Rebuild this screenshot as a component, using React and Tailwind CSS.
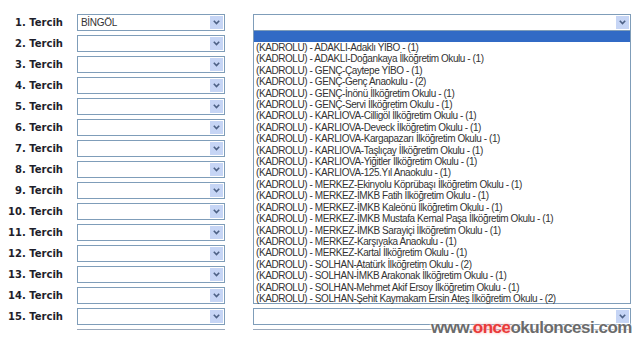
const schools = [
  'ADAKLI-Adaklı YİBO - (1)',
  'ADAKLI-Doğankaya İlköğretim Okulu - (1)',
  'GENÇ-Çaytepe YİBO - (1)',
  'GENÇ-Genç Anaokulu - (2)',
  'GENÇ-İnönü İlköğretim Okulu - (1)',
  'GENÇ-Servi İlköğretim Okulu - (1)',
  'KARLIOVA-Cilligöl İlköğretim Okulu - (1)',
  'KARLIOVA-Deveck İlköğretim Okulu - (1)',
  'KARLIOVA-Kargapazarı İlköğretim Okulu - (1)',
  'KARLIOVA-Taşlıçay İlköğretim Okulu - (1)',
  'KARLIOVA-Yiğitler İlköğretim Okulu - (1)',
  'KARLIOVA-125.Yıl Anaokulu - (1)',
  'MERKEZ-Ekinyolu Köprübaşı İlköğretim Okulu - (1)',
  'MERKEZ-İMKB Fatih İlköğretim Okulu - (1)',
  'MERKEZ-İMKB Kaleönü İlköğretim Okulu - (1)',
  'MERKEZ-İMKB Mustafa Kemal Paşa İlköğretim Okulu - (1)',
  'MERKEZ-İMKB Sarayiçi İlköğretim Okulu - (1)',
  'MERKEZ-Karşıyaka Anaokulu - (1)',
  'MERKEZ-Kartal İlköğretim Okulu - (1)',
  'SOLHAN-Atatürk İlköğretim Okulu - (2)',
  'SOLHAN-İMKB Arakonak İlköğretim Okulu - (1)',
  'SOLHAN-Mehmet Akif Ersoy İlköğretim Okulu - (1)',
  'SOLHAN-Şehit Kaymakam Ersin Ateş İlköğretim Okulu - (2)'
]

function Arrow() {
  return (
    <div className="absolute right-[1px] top-[1px] w-[13px] h-[13px] bg-[#c6d5f5] flex items-center justify-center">
      <svg width="7" height="5" viewBox="0 0 7 5">
        <path d="M0.8 0.8 L3.5 3.6 L6.2 0.8" fill="none" stroke="#4d6185" strokeWidth="1.6" />
      </svg>
    </div>
  )
}

function Select({ wide, value, children }) {
  return (
    <div className={`relative h-[17px] border border-[#7f9db9] bg-white ${wide ? 'w-[378px]' : 'w-[148px]'}`}>
      {value && (
        <span className="absolute left-[3px] top-[1px] text-[10px] leading-[13px] tracking-[-0.3px] text-[#333] font-['Liberation_Sans',sans-serif]">
          {value}
        </span>
      )}
      <Arrow />
      {children}
    </div>
  )
}

function DropList() {
  return (
    <div className="absolute left-[-1px] top-full w-[378px] h-[274px] border border-[#7f9db9] bg-white z-10 font-['Liberation_Sans',sans-serif] text-[10px] leading-[11.4px] tracking-[-0.42px] text-[#333]">
      <div className="h-[11px] bg-[#316ac5]" />
      {schools.map((s) => (
        <div key={s} className="pl-[2px] whitespace-nowrap">(KADROLU) - {s}</div>
      ))}
    </div>
  )
}

export default function App() {
  const rows = Array.from({ length: 15 }, (_, i) => i + 1)

  return (
    <div className="relative w-[640px] h-[342px] overflow-hidden bg-white">
      <div className="flex flex-col gap-[4px] pt-[14px]">
        {rows.map((n) => (
          <div key={n} className="flex items-center h-[17px]">
            <div className="w-[64px] pr-[1px] text-right text-[10px] font-bold text-[#1e1e2a] font-['DejaVu_Sans',sans-serif]">
              {n}. Tercih
            </div>
            <div className="ml-[13px]">
              <Select value={n === 1 ? 'BİNGÖL' : ''} />
            </div>
            <div className="ml-[28px]">
              <Select wide>{n === 1 && <DropList />}</Select>
            </div>
          </div>
        ))}
        {/* next row, cut off */}
        <div className="flex h-[17px]">
          <div className="ml-[77px] w-[148px] border-t border-[#9aa9bc]" />
          <div className="ml-[28px] w-[378px] border-t border-[#9aa9bc]" />
        </div>
      </div>

      <div className="absolute left-[431px] top-[315px] text-[17px] font-bold tracking-[-0.5px] font-['Liberation_Sans',sans-serif] text-[#6b6b6b] [text-shadow:0_0_2px_#fff,0_0_2px_#fff,0_0_2px_#fff]">
        www.<span className="text-[#e83a3a] [text-shadow:0_0_3px_#ff9a9a,0_0_2px_#fff]">once</span>okuloncesi.com
      </div>
    </div>
  )
}
